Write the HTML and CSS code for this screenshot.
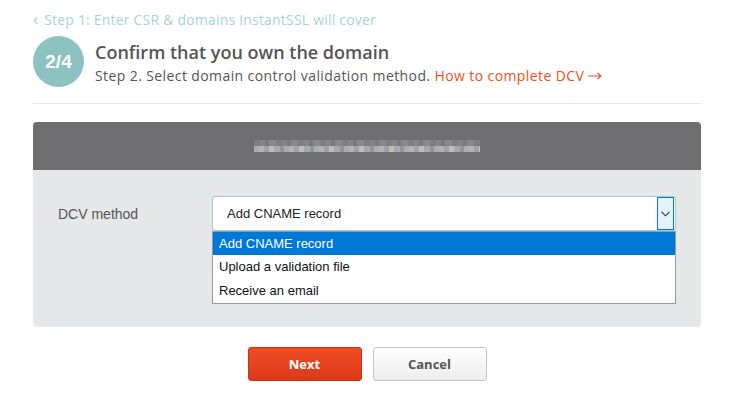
FILE: index.html
```html
<!DOCTYPE html>
<html>
<head>
<meta charset="utf-8">
<link rel="stylesheet" href="styles.css">
</head>
<body>
<div class="page">
  <div class="back"><span class="chev">&lsaquo;</span> Step 1: Enter CSR &amp; domains InstantSSL will cover</div>
  <div class="head">
    <div class="circle">2/4</div>
    <div class="titles">
      <h1 class="title">Confirm that you own the domain</h1>
      <div class="sub">Step 2. Select domain control validation method. <span class="link">How to complete DCV <svg class="arr" width="14" height="8" viewBox="0 0 14 8"><path d="M0 4 H13 M9.5 1 L13 4 L9.5 7" fill="none" stroke="#f04e23" stroke-width="1.1"/></svg></span></div>
    </div>
  </div>
  <div class="rule"></div>
  <div class="panel">
    <div class="panel-head"><div class="blur"><div class="blur-top"></div><div class="blur-bot"></div></div></div>
    <div class="panel-body">
      <div class="label">DCV method</div>
      <div class="select-wrap">
        <div class="select">
          <span class="select-text">Add CNAME record</span>
          <span class="arrow"><svg width="9" height="6" viewBox="0 0 9 6"><path d="M0.5 0.8 L4.5 4.8 L8.5 0.8" fill="none" stroke="#333" stroke-width="1.1"/></svg></span>
        </div>
        <ul class="menu">
          <li class="sel">Add CNAME record</li>
          <li>Upload a validation file</li>
          <li>Receive an email</li>
        </ul>
      </div>
    </div>
  </div>
  <div class="buttons">
    <button class="btn next">Next</button>
    <button class="btn cancel">Cancel</button>
  </div>
</div>
</body>
</html>
```
FILE: styles.css
```css
* { box-sizing: border-box; }
body { margin: 0; background: #fff; font-family: "Open Sans", "DejaVu Sans", sans-serif; }
.page { width: 736px; padding: 10px 35px 0 33px; }
.back { height: 17px; line-height: 17px; font-size: 14px; color: #a9d3d2; white-space: nowrap; letter-spacing: 0.2px; }
.chev { font-size: 17px; display: inline-block; margin-right: 2px; }
.head { display: flex; gap: 11px; margin-top: 9px; }
.circle { width: 51px; height: 51px; border-radius: 50%; background: #8cc3c1; color: #fff; font-family: "Liberation Sans", Arial, sans-serif; font-weight: 700; font-size: 19px; display: flex; align-items: center; justify-content: center; flex: none; }
.titles { padding-top: 5px; }
.title { margin: 0; font-size: 18px; line-height: 22px; font-weight: 600; color: #555; }
.sub { margin-top: 3px; font-size: 14px; line-height: 20px; color: #555; white-space: nowrap; letter-spacing: 0.4px; }
.link { color: #f04e23; }
.arr { vertical-align: 1px; }
.rule { margin-top: 16px; border-top: 1px solid #e6e6e6; }
.panel { margin-top: 18px; border-radius: 4px; overflow: hidden; }
.panel-head { height: 48px; background: #6e6e70; display: flex; align-items: center; justify-content: center; }
.blur { width: 226px; margin-left: 0; }
.blur-top { height: 6px; background: repeating-linear-gradient(90deg, #7e7e80 0 6px, #858586 6px 11px, #7a7a7c 11px 15px, #88888a 15px 22px); }
.blur-bot { height: 6px; background: repeating-linear-gradient(90deg, #a9adb0 0 5px, #b5b2b6 5px 10px, #9fa3a6 10px 15px, #bfbdb8 15px 20px, #a6a9ac 20px 26px, #949497 26px 30px); }
.panel-body { height: 157px; background: #e6e7e9; display: flex; padding: 26px 25px 0 25px; }
.label { width: 154px; padding-top: 10px; font-family: "Liberation Sans", Arial, sans-serif; font-size: 14px; color: #555; }
.select-wrap { position: relative; width: 464px; }
.select { height: 35px; background: #fff; border: 1px solid #9fd0cf; border-radius: 3px; box-shadow: 0 0 1px #a8d6d5; display: flex; align-items: center; justify-content: space-between; padding: 0 1px 0 14px; font-family: "Liberation Sans", Arial, sans-serif; font-size: 13px; color: #222; }
.arrow { width: 17px; height: 33px; border: 1px solid #0078d7; background: #e5f1fb; display: flex; align-items: center; justify-content: center; }
.menu { position: absolute; left: 0; top: 35px; width: 464px; margin: 0; padding: 0; list-style: none; background: #fff; border: 1px solid #9a9a9a; font-family: "Liberation Sans", Arial, sans-serif; font-size: 13px; color: #111; }
.menu li { height: 24px; line-height: 24px; padding-left: 6px; }
.menu li.sel { height: 23px; line-height: 23px; background: #0078d7; color: #fff; }
.buttons { display: flex; justify-content: center; gap: 11px; margin-top: 20px; }
.btn { width: 114px; height: 34px; border-radius: 3px; font-family: "Open Sans", sans-serif; font-weight: 700; font-size: 13px; cursor: pointer; }
.next { background: linear-gradient(#f14d25, #dc391a); border: 1px solid #c9341a; color: #fff; }
.cancel { background: linear-gradient(#ffffff, #ededed); border: 1px solid #c4c4c4; color: #555; }
```
